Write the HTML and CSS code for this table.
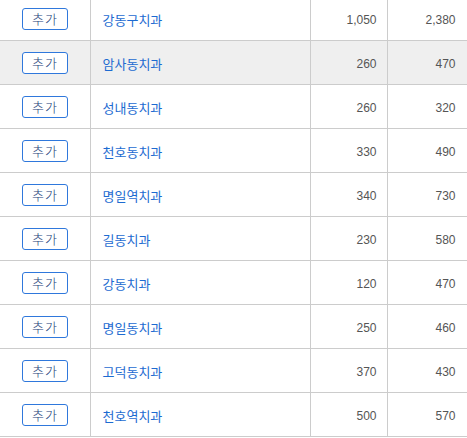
FILE: index.html
```html
<!DOCTYPE html>
<html lang="ko">
<head>
<meta charset="utf-8">
<link rel="stylesheet" href="styles.css">
</head>
<body>
<table class="list">
  <colgroup>
    <col class="c-btn"><col class="c-name"><col class="c-n1"><col class="c-n2">
  </colgroup>
  <tbody>
    <tr><td class="btn-cell"><button class="add">추가</button></td><td class="name"><a>강동구치과</a></td><td class="num">1,050</td><td class="num last">2,380</td></tr>
    <tr class="hover"><td class="btn-cell"><button class="add">추가</button></td><td class="name"><a>암사동치과</a></td><td class="num">260</td><td class="num last">470</td></tr>
    <tr><td class="btn-cell"><button class="add">추가</button></td><td class="name"><a>성내동치과</a></td><td class="num">260</td><td class="num last">320</td></tr>
    <tr><td class="btn-cell"><button class="add">추가</button></td><td class="name"><a>천호동치과</a></td><td class="num">330</td><td class="num last">490</td></tr>
    <tr><td class="btn-cell"><button class="add">추가</button></td><td class="name"><a>명일역치과</a></td><td class="num">340</td><td class="num last">730</td></tr>
    <tr><td class="btn-cell"><button class="add">추가</button></td><td class="name"><a>길동치과</a></td><td class="num">230</td><td class="num last">580</td></tr>
    <tr><td class="btn-cell"><button class="add">추가</button></td><td class="name"><a>강동치과</a></td><td class="num">120</td><td class="num last">470</td></tr>
    <tr><td class="btn-cell"><button class="add">추가</button></td><td class="name"><a>명일동치과</a></td><td class="num">250</td><td class="num last">460</td></tr>
    <tr><td class="btn-cell"><button class="add">추가</button></td><td class="name"><a>고덕동치과</a></td><td class="num">370</td><td class="num last">430</td></tr>
    <tr><td class="btn-cell"><button class="add">추가</button></td><td class="name"><a>천호역치과</a></td><td class="num">500</td><td class="num last">570</td></tr>
  </tbody>
</table>
</body>
</html>
```
FILE: styles.css
```css
html, body {
  margin: 0;
  padding: 0;
  background: #fff;
  overflow: hidden;
}
body {
  font-family: "Noto Sans CJK KR", "Noto Sans", sans-serif;
  font-size: 12px;
  color: #333;
}
.list {
  border-collapse: collapse;
  table-layout: fixed;
  width: 467px;
  margin-top: -3px;
}
.c-btn { width: 90px; }
.c-name { width: 220px; }
.c-n1 { width: 77px; }
.c-n2 { width: 80px; }
.list td {
  height: 41px;
  padding: 2px 0 0 0;
  border-bottom: 1px solid #cccccc;
  border-right: 1px solid #cccccc;
  vertical-align: middle;
  line-height: 16px;
}
.hover td {
  background: #efefef;
}
.list td.btn-cell {
  height: 42px;
  padding: 1px 0 0 22px;
}
.add {
  display: block;
  width: 46px;
  height: 22px;
  margin: 0;
  padding: 0;
  background: #fff;
  border: 1px solid #2f78dc;
  border-radius: 3px;
  font-family: "Noto Sans CJK KR", sans-serif;
  font-size: 13px;
  font-weight: 300;
  color: #1c3f7a;
  line-height: 18px;
  letter-spacing: 1px;
}
.name {
  padding-left: 12px !important;
}
.name a {
  color: #1d6bd1;
  font-size: 13px;
}
.num {
  text-align: right;
  padding-right: 10px !important;
  color: #555;
  font-family: "Liberation Sans", sans-serif;
  font-size: 12px;
}
.num.last {
  padding-right: 11px !important;
}
```
